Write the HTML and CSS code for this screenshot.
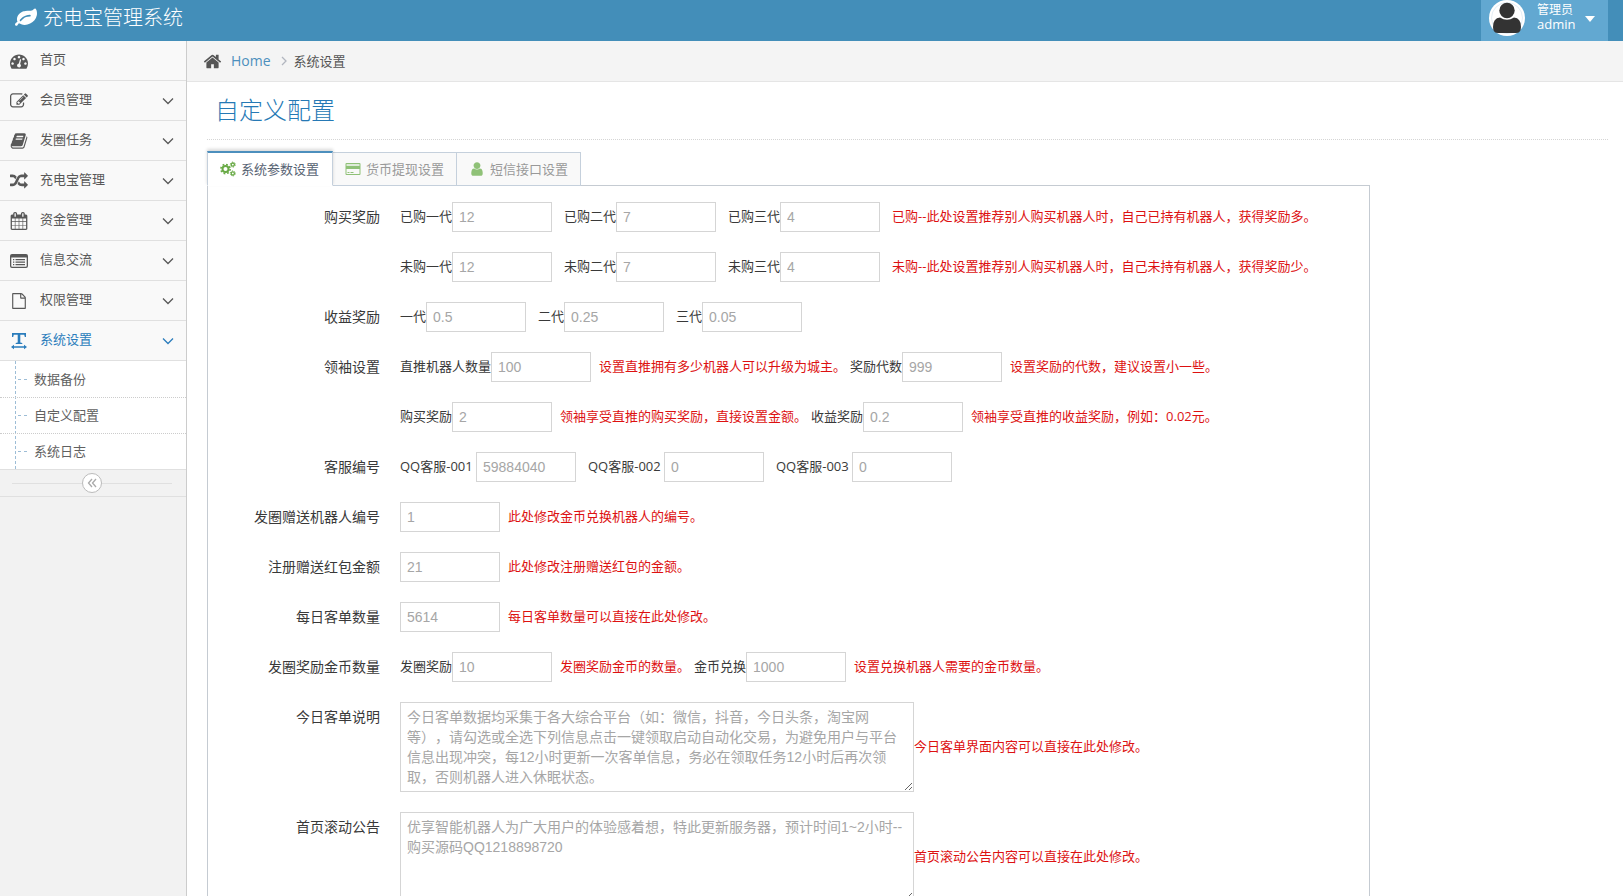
FILE: index.html
```html
<!DOCTYPE html>
<html lang="zh-CN">
<head>
<meta charset="utf-8">
<title>充电宝管理系统</title>
<link rel="stylesheet" href="styles.css">
</head>
<body>
<svg class="sprite" aria-hidden="true">
  <symbol id="down" viewBox="0 0 12 8"><path d="M1 1.5l5 5 5-5" fill="none" stroke="currentColor" stroke-width="1.300"/></symbol>
</svg>
<header class="navbar">
  <a class="brand" href="#">
    <svg class="brand-icon" viewBox="0 0 1792 1792"><path d="M1280 704q0-26-19-45t-45-19q-172 0-318 49.500t-259.500 134-235.500 219.500q-19 21-19 45 0 26 19 45t45 19q24 0 45-19 27-24 74-71t67-66q137-124 268.500-176t313.500-52q26 0 45-19t19-45zm512-198q0 95-20 193-46 224-184.500 383t-357.500 268q-214 108-438 108-148 0-286-47-15-5-88-42t-96-37q-16 0-39.500 32t-45 70-52.500 70-60 32q-43 0-63.500-17.500t-45.500-59.500q-2-4-6-11t-5.500-10-3-9.500-1.500-13.500q0-35 31-73.500t68-65.500 68-56 31-48q0-4-14-38t-16-44q-9-51-9-104 0-115 43.500-220t119-184.500 170.500-139 204-95.500q55-18 145-25.500t179.500-9 178.500-6 163.500-24 113.500-56.500l29.500-29.500 29.500-28 27-20 36.500-16 43.500-4.500q39 0 70.500 46t47.500 112 24 124 8 96z"/></svg>
    <span>充电宝管理系统</span>
  </a>
  <button class="user" type="button">
    <svg class="avatar" viewBox="0 0 36 36"><circle cx="18" cy="18" r="18" fill="#fff"/><circle cx="18" cy="18" r="15.500" fill="none" stroke="#e4eef5"/><circle cx="18" cy="10.500" r="7.700" fill="#333"/><path d="M4 27q0-9 7-9.500 7 4.500 14 0 7 .5 7 9.500 0 6-5 6H9q-5 0-5-6z" fill="#333"/></svg>
    <span class="user-text"><small>管理员</small>admin</span>
    <svg class="caret" viewBox="0 0 10 6"><path d="M0 0h10l-5 6z"/></svg>
  </button>
</header>
<div class="shell">
  <nav class="sidebar">
    <ul class="menu">
      <li><a href="#"><svg class="mi" viewBox="0 0 1792 1792"><path d="M384 1152q0-53-37.500-90.500t-90.500-37.500-90.500 37.500-37.500 90.500 37.500 90.500 90.500 37.500 90.500-37.500 37.500-90.500zm192-448q0-53-37.500-90.500t-90.500-37.500-90.500 37.500-37.500 90.500 37.500 90.500 90.500 37.500 90.500-37.500 37.500-90.500zm428 481l101-382q6-26-7.500-48.500t-38.500-29.500-48 6.500-30 39.500l-101 382q-60 5-107 43.500t-63 98.500q-20 77 20 146t117 89 146-20 89-117q16-60-6-117t-72-91zm660-33q0-53-37.500-90.500t-90.500-37.500-90.500 37.500-37.500 90.500 37.500 90.500 90.500 37.500 90.500-37.500 37.500-90.500zm-640-640q0-53-37.500-90.500t-90.500-37.500-90.500 37.500-37.500 90.500 37.500 90.500 90.500 37.500 90.500-37.500 37.500-90.500zm448 192q0-53-37.500-90.500t-90.500-37.500-90.500 37.500-37.500 90.500 37.500 90.500 90.500 37.500 90.500-37.500 37.500-90.500zm320 448q0 261-141 483-19 29-54 29h-1402q-35 0-54-29-141-221-141-483 0-182 71-348t191-286 286-191 348-71 348 71 286 191 191 286 71 348z"/></svg><span>首页</span></a></li>
      <li><a href="#"><svg class="mi" viewBox="0 0 1792 1792"><path d="M888 1184l116-116-152-152-116 116v56h96v96h56zm440-720q-16-16-33 1l-350 350q-17 17-1 33t33-1l350-350q17-17 1-33zm80 594v190q0 119-84.500 203.500t-203.500 84.500h-832q-119 0-203.500-84.500t-84.500-203.500v-832q0-119 84.500-203.500t203.500-84.500h832q63 0 117 25 15 7 18 23 3 17-9 29l-49 49q-14 14-32 8-23-6-45-6h-832q-66 0-113 47t-47 113v832q0 66 47 113t113 47h832q66 0 113-47t47-113v-126q0-13 9-22l64-64q15-15 35-7t20 29zm-96-738l288 288-672 672h-288v-288zm444 132l-92 92-288-288 92-92q28-28 68-28t68 28l152 152q28 28 28 68t-28 68z"/></svg><span>会员管理</span><svg class="arrow"><use href="#down"/></svg></a></li>
      <li><a href="#"><svg class="mi" viewBox="0 0 1792 1792"><path d="M1703 478q40 57 18 129l-275 906q-19 64-76.500 107.500t-122.500 43.500h-923q-77 0-148.500-53.500t-99.500-131.500q-24-67-2-127 0-4 3-27t4-37q1-8-3-21.500t-3-19.500q2-11 8-21t16.500-23.500 16.500-23.500q23-38 45-91.500t30-91.500q3-10 .5-30t-.5-28q3-11 17-28t17-23q21-36 42-92t25-90q1-9-2.500-32t.5-28q4-13 22-30.500t22-22.500q19-26 42.500-84.500t27.500-96.500q1-8-3-25.500t-2-26.500q2-8 9-18t18-23 17-21q8-12 16.500-30.500t15-35 16-36 19.500-32 26.500-23.500 36-11.500 47.500 5.500l-1 3q38-9 51-9h761q74 0 114 56t18 130l-274 906q-36 119-71.500 153.500t-128.500 34.500h-869q-27 0-38 15-11 16-1 43 24 70 144 70h923q29 0 56-15.500t35-41.500l300-987q7-22 5-57 38 15 59 43zm-1064 2q-4 13 2 22.500t20 9.500h608q13 0 25.500-9.500t16.500-22.500l21-64q4-13-2-22.500t-20-9.500h-608q-13 0-25.500 9.500t-16.500 22.500zm-83 256q-4 13 2 22.500t20 9.500h608q13 0 25.500-9.500t16.500-22.500l21-64q4-13-2-22.500t-20-9.500h-608q-13 0-25.500 9.500t-16.500 22.500z"/></svg><span>发圈任务</span><svg class="arrow"><use href="#down"/></svg></a></li>
      <li><a href="#"><svg class="mi" viewBox="0 0 1792 1792"><path d="M666 481q-60 92-137 273-22-45-37-72.500t-40.500-63.500-51-56.500-63-35-81.500-14.500h-224q-14 0-23-9t-9-23v-192q0-14 9-23t23-9h224q250 0 410 225zm1126 799q0 14-9 23l-320 320q-9 9-23 9-13 0-22.500-9.500t-9.500-22.500v-192q-32 0-85 .5t-81 1-73-1-71-5-64-10.500-63-18.500-58-28.500-59-40-55-53.500-56-69.500q59-93 136-273 22 45 37 72.500t40.500 63.500 51 56.500 63 35 81.500 14.500h256v-192q0-14 9-23t23-9q12 0 24 10l319 319q9 9 9 23zm0-896q0 14-9 23l-320 320q-9 9-23 9-13 0-22.500-9.500t-9.500-22.500v-192h-256q-48 0-87 15t-69 45-51 61.500-45 77.500q-32 62-78 171-29 66-49.500 111t-54 105-64 100-74 83-90 68.500-106.500 42-128 16.500h-224q-14 0-23-9t-9-23v-192q0-14 9-23t23-9h224q48 0 87-15t69-45 51-61.500 45-77.500q32-62 78-171 29-66 49.500-111t54-105 64-100 74-83 90-68.500 106.500-42 128-16.500h256v-192q0-14 9-23t23-9q12 0 24 10l319 319q9 9 9 23z"/></svg><span>充电宝管理</span><svg class="arrow"><use href="#down"/></svg></a></li>
      <li><a href="#"><svg class="mi" viewBox="0 0 1792 1792"><path d="M192 1664h288v-288h-288v288zm352 0h320v-288h-320v288zm-352-352h288v-320h-288v320zm352 0h320v-320h-320v320zm-352-384h288v-288h-288v288zm736 736h320v-288h-320v288zm-384-736h320v-288h-320v288zm768 736h288v-288h-288v288zm-384-352h320v-320h-320v320zm-352-864v-288q0-13-9.500-22.500t-22.500-9.500h-64q-13 0-22.500 9.500t-9.500 22.500v288q0 13 9.500 22.500t22.500 9.500h64q13 0 22.500-9.500t9.500-22.500zm736 864h288v-320h-288v320zm-384-384h320v-288h-320v288zm384 0h288v-288h-288v288zm32-480v-288q0-13-9.500-22.500t-22.500-9.500h-64q-13 0-22.500 9.500t-9.500 22.500v288q0 13 9.500 22.500t22.500 9.500h64q13 0 22.500-9.500t9.500-22.500zm384-64v1280q0 52-38 90t-90 38h-1408q-52 0-90-38t-38-90v-1280q0-52 38-90t90-38h128v-96q0-66 47-113t113-47h64q66 0 113 47t47 113v96h384v-96q0-66 47-113t113-47h64q66 0 113 47t47 113v96h128q52 0 90 38t38 90z"/></svg><span>资金管理</span><svg class="arrow"><use href="#down"/></svg></a></li>
      <li><a href="#"><svg class="mi" viewBox="0 0 18 18"><path fill-rule="evenodd" d="M2 2h14q2 0 2 2v10q0 2-2 2H2q-2 0-2-2V4q0-2 2-2zM1.300 5.500V14q0 .7.7.7h14q.7 0 .7-.7V5.500z"/><path d="M3 7h1.300v1.200H3zM5.500 7H15v1.200H5.500zM3 9.500h1.300v1.200H3zM5.500 9.500H15v1.200H5.500zM3 12h1.300v1.200H3zM5.500 12H15v1.200H5.500z"/></svg><span>信息交流</span><svg class="arrow"><use href="#down"/></svg></a></li>
      <li><a href="#"><svg class="mi file" viewBox="0 0 1792 1792"><path d="M1596 380q28 28 48 76t20 88v1152q0 40-28 68t-68 28h-1344q-40 0-68-28t-28-68v-1600q0-40 28-68t68-28h896q40 0 88 20t76 48zm-444-244v376h376q-10-29-22-41l-313-313q-12-12-41-22zm384 1528v-1024h-416q-40 0-68-28t-28-68v-416h-768v1536h1280z"/></svg><span>权限管理</span><svg class="arrow"><use href="#down"/></svg></a></li>
      <li class="open"><a href="#"><svg class="mi" viewBox="0 0 18 18"><path d="M2 1h14v4h-1.200l-.6-2.300H10.300V10.500l2 .5v1H5.700v-1l2-.5V2.700H3.800L3.200 5H2zM1 15l3-2.300v1.500h10v-1.500l3 2.300-3 2.300v-1.500H4v1.500z"/></svg><span>系统设置</span><svg class="arrow"><use href="#down"/></svg></a>
        <ul class="submenu">
          <li><a href="#">数据备份</a></li>
          <li><a href="#">自定义配置</a></li>
          <li><a href="#">系统日志</a></li>
        </ul>
      </li>
    </ul>
    <div class="collapse"><button type="button" aria-label="收起菜单"><svg viewBox="0 0 10 10"><path d="M5 1L1.500 5 5 9M9 1L5.500 5 9 9" fill="none" stroke="currentColor" stroke-width="1.300"/></svg></button></div>
  </nav>
  <main class="main">
    <div class="crumbs">
      <svg class="home" viewBox="0 0 1792 1792"><path d="M1472 992v480q0 26-19 45t-45 19h-384v-384h-256v384h-384q-26 0-45-19t-19-45v-480q0-1 .5-3t.5-3l575-474 575 474q1 2 1 6zm223-69l-62 74q-8 9-21 11h-3q-13 0-21-7l-692-577-692 577q-12 8-24 7-13-2-21-11l-62-74q-8-10-7-23.500t11-21.500l719-599q32-26 76-26t76 26l244 204v-195q0-14 9-23t23-9h192q14 0 23 9t9 23v408l219 182q10 8 11 21.500t-7 23.500z"/></svg>
      <a href="#">Home</a>
      <svg class="sep" viewBox="0 0 6 10"><path d="M1 1l4 4-4 4" fill="none" stroke="currentColor" stroke-width="1.300"/></svg>
      <span>系统设置</span>
    </div>
    <div class="content">
      <h1>自定义配置</h1>
      <div class="tabbed">
        <div class="tabs" role="tablist">
          <button class="tab active" type="button" role="tab" aria-selected="true"><svg viewBox="0 0 16 16"><g fill="none" stroke="currentColor"><circle cx="5.500" cy="8" r="3" stroke-width="2"/><circle cx="5.500" cy="8" r="4.600" stroke-width="1.600" stroke-dasharray="1.800 1.813"/><circle cx="12.800" cy="3.600" r="1.600" stroke-width="1.300"/><circle cx="12.800" cy="3.600" r="2.500" stroke-width="1" stroke-dasharray="1.300 1.318"/><circle cx="12.800" cy="12.400" r="1.600" stroke-width="1.300"/><circle cx="12.800" cy="12.400" r="2.500" stroke-width="1" stroke-dasharray="1.300 1.318"/></g></svg>系统参数设置</button>
          <button class="tab" type="button" role="tab"><svg viewBox="0 0 16 16"><path fill-rule="evenodd" d="M1.500 2h13q1 0 1 1v10q0 1-1 1h-13q-1 0-1-1V3q0-1 1-1zM1.500 3.200v1.600h13V3.200zM1.500 8v5h13V8z"/><path d="M2.500 11h2v1h-2zM5.500 11h3v1h-3z"/></svg>货币提现设置</button>
          <button class="tab" type="button" role="tab"><svg viewBox="0 0 1792 1792"><path d="M1536 1399q0 109-62.500 187t-150.500 78h-854q-88 0-150.500-78t-62.500-187q0-85 8.500-160.500t31.500-152 58.500-131 94-89 134.500-34.500q131 128 313 128t313-128q76 0 134.500 34.500t94 89 58.500 131 31.500 152 8.500 160.500zm-256-887q0 159-112.500 271.500t-271.500 112.500-271.500-112.500-112.500-271.500 112.500-271.500 271.500-112.500 271.500 112.500 112.500 271.500z"/></svg>短信接口设置</button>
        </div>
        <form class="panel">
          <div class="row"><span class="name">购买奖励</span><div class="fields wide">
            <label>已购一代<input type="text" value="12"></label><label>已购二代<input type="text" value="7"></label><label>已购三代<input type="text" value="4"></label><span class="hint">已购--此处设置推荐别人购买机器人时，自己已持有机器人，获得奖励多。</span></div></div>
          <div class="row"><span class="name"></span><div class="fields wide">
            <label>未购一代<input type="text" value="12"></label><label>未购二代<input type="text" value="7"></label><label>未购三代<input type="text" value="4"></label><span class="hint">未购--此处设置推荐别人购买机器人时，自己未持有机器人，获得奖励少。</span></div></div>
          <div class="row"><span class="name">收益奖励</span><div class="fields wide">
            <label>一代<input type="text" value="0.5"></label><label>二代<input type="text" value="0.25"></label><label>三代<input type="text" value="0.05"></label></div></div>
          <div class="row"><span class="name">领袖设置</span><div class="fields">
            <label>直推机器人数量<input type="text" value="100"></label><span class="hint">设置直推拥有多少机器人可以升级为城主。</span><label>奖励代数<input type="text" value="999"></label><span class="hint">设置奖励的代数，建议设置小一些。</span></div></div>
          <div class="row"><span class="name"></span><div class="fields">
            <label>购买奖励<input type="text" value="2"></label><span class="hint">领袖享受直推的购买奖励，直接设置金额。</span><label>收益奖励<input type="text" value="0.2"></label><span class="hint">领袖享受直推的收益奖励，例如：0.02元。</span></div></div>
          <div class="row"><span class="name">客服编号</span><div class="fields wide service">
            <label><span>QQ客服-001</span><input type="text" value="59884040"></label><label><span>QQ客服-002</span><input type="text" value="0"></label><label><span>QQ客服-003</span><input type="text" value="0"></label></div></div>
          <div class="row"><label class="name" for="robot">发圈赠送机器人编号</label><div class="fields"><input id="robot" type="text" value="1"><span class="hint">此处修改金币兑换机器人的编号。</span></div></div>
          <div class="row"><label class="name" for="bonus">注册赠送红包金额</label><div class="fields"><input id="bonus" type="text" value="21"><span class="hint">此处修改注册赠送红包的金额。</span></div></div>
          <div class="row"><label class="name" for="daily">每日客单数量</label><div class="fields"><input id="daily" type="text" value="5614"><span class="hint">每日客单数量可以直接在此处修改。</span></div></div>
          <div class="row"><span class="name">发圈奖励金币数量</span><div class="fields">
            <label>发圈奖励<input type="text" value="10"></label><span class="hint">发圈奖励金币的数量。</span><label>金币兑换<input type="text" value="1000"></label><span class="hint">设置兑换机器人需要的金币数量。</span></div></div>
          <div class="row"><label class="name" for="note">今日客单说明</label><div class="fields tall"><textarea id="note">今日客单数据均采集于各大综合平台（如：微信，抖音，今日头条，淘宝网等），请勾选或全选下列信息点击一键领取启动自动化交易，为避免用户与平台信息出现冲突，每12小时更新一次客单信息，务必在领取任务12小时后再次领取，否则机器人进入休眠状态。</textarea><span class="hint">今日客单界面内容可以直接在此处修改。</span></div></div>
          <div class="row"><label class="name" for="notice">首页滚动公告</label><div class="fields tall"><textarea id="notice">优享智能机器人为广大用户的体验感着想，特此更新服务器，预计时间1~2小时--购买源码QQ1218898720</textarea><span class="hint">首页滚动公告内容可以直接在此处修改。</span></div></div>
        </form>
      </div>
    </div>
  </main>
</div>
</body>
</html>
```
FILE: styles.css
```css
* { box-sizing: border-box; }
body {
  margin: 0;
  height: 100vh;
  overflow: hidden;
  display: flex;
  flex-direction: column;
  font: 13px/20px "Open Sans", "Noto Sans CJK SC", sans-serif;
  color: #393939;
  background: #fff;
  text-spacing-trim: space-all;
}
a { text-decoration: none; color: inherit; }
ul { list-style: none; margin: 0; padding: 0; }
svg { fill: currentColor; flex: none; }
button { font: inherit; cursor: pointer; }
.sprite { display: none; }

.navbar {
  flex: none;
  height: 41px;
  display: flex;
  justify-content: space-between;
  padding: 0 15px;
  background: #438eb9;
  color: #fff;
}
.brand { display: flex; align-items: center; gap: 6px; padding-bottom: 5px; font-size: 20px; font-weight: 300; }
.brand-icon { width: 22px; height: 22px; }
.user {
  width: 127px;
  display: flex;
  align-items: flex-start;
  padding: 0 8px;
  border: 0;
  background: #62a8d1;
  color: #fff;
  text-align: left;
}
.avatar { width: 36px; height: 36px; }
.user-text { margin: 2px 0 0 12px; font-size: 13px; line-height: 15px; flex: 1; }
.user-text small { display: block; font-size: 12px; }
.caret { width: 10px; height: 6px; margin: 16px 5px 0 0; }

.shell { flex: 1; min-height: 0; display: flex; }
.sidebar { flex: none; width: 187px; background: #f2f2f2; border-right: 1px solid #ccc; }
.menu > li > a {
  display: flex;
  align-items: center;
  height: 40px;
  padding: 0 12px 0 10px;
  border-bottom: 1px solid #e0e0e0;
  background: #f9f9f9;
  color: #585858;
}
.menu > li > a span { flex: 1; padding-bottom: 3px; }
.mi { width: 18px; height: 18px; margin-right: 12px; }
.file { height: 16px; }
.arrow { width: 12px; height: 8px; }
.menu > .open > a { color: #2b7dbc; }
.submenu { position: relative; background: #fff; }
.submenu::before {
  content: "";
  position: absolute;
  left: 15px;
  top: 0;
  bottom: 0;
  border-left: 1px dashed #9dbdd6;
}
.submenu a { position: relative; display: block; height: 36px; padding: 8px 0 8px 34px; color: #616161; border-top: 1px dotted #ccc; line-height: 19px; }
.submenu li:first-child a { border-top-color: transparent; }
.submenu a::before {
  content: "";
  position: absolute;
  left: 18px;
  top: 17px;
  width: 9px;
  border-top: 1px dashed #9dbdd6;
}
.collapse {
  display: flex;
  align-items: center;
  justify-content: center;
  height: 28px;
  padding: 0 14px 0 12px;
  border-top: 1px solid #e0e0e0;
  border-bottom: 1px solid #e0e0e0;
}
.collapse::before, .collapse::after { content: ""; flex: 1; border-top: 1px solid #e0e0e0; }
.collapse button {
  display: grid;
  place-items: center;
  width: 20px;
  height: 20px;
  padding: 0;
  border: 1px solid #bbb;
  border-radius: 50%;
  background: #fff;
  color: #aaa;
}
.collapse svg { width: 10px; height: 10px; }

.main { flex: 1; min-width: 0; overflow: hidden; }
.crumbs {
  display: flex;
  align-items: center;
  height: 41px;
  padding: 0 16px;
  background: #f4f4f4;
  border-bottom: 1px solid #e5e5e5;
  color: #555;
}
.crumbs a { margin: 0 10px 0 9px; font-size: 14px; color: #4c8fbd; }
.home { width: 19px; height: 19px; }
.sep { width: 6px; height: 10px; margin-right: 7px; color: #b2b6bf; }
.content { padding: 8px 15px 24px 20px; }
h1 {
  margin: 0 0 11px;
  padding: 0 8px 10px;
  border-bottom: 1px dotted #d5d5d5;
  color: #2679b5;
  font-size: 24px;
  font-weight: 300;
  line-height: 39px;
}
.tabbed { width: 83%; }
.tabs { display: flex; align-items: flex-end; }
.tab {
  display: flex;
  align-items: center;
  gap: 5px;
  height: 34px;
  padding: 0 12px 1px;
  border: 1px solid #c5d0dc;
  border-left: 0;
  background: #f9f9f9;
  color: #999;
}
.tab svg { width: 16px; height: 16px; color: #8fc177; }
.tab.active {
  z-index: 1;
  height: 35px;
  padding-right: 13px;
  border-left: 1px solid #c5d0dc;
  border-top: 2px solid #4c8fbd;
  border-bottom-color: #fff;
  background: #fff;
  color: #576373;
  box-shadow: 0 -2px 3px rgba(0, 0, 0, .15);
}
.tab.active svg { color: #69aa46; }
.panel {
  display: flex;
  flex-direction: column;
  gap: 20px;
  margin-top: -1px;
  padding: 16px 12px;
  border: 1px solid #c5cbd2;
}
.row { display: flex; gap: 20px; }
.name { flex: none; width: 160px; text-align: right; font-size: 14px; line-height: 30px; }
.fields { display: flex; align-items: center; height: 30px; line-height: 28px; white-space: nowrap; }
.fields.tall { height: 90px; }
.fields label { display: flex; line-height: 28px; }
.service label span { min-width: 76px; }
.hint { margin: 0 4px 0 8px; padding-bottom: 2px; color: #dd1111; }
.wide { gap: 12px; }
.wide .hint, .tall .hint { margin: 0; }
input, textarea {
  border: 1px solid #d5d5d5;
  border-radius: 0;
  background: #fff;
  color: #a6a6a6;
  font: 14px/20px "Liberation Sans", "Noto Sans CJK SC", sans-serif;
}
input { width: 100px; height: 30px; padding: 4px 6px; }
textarea { width: 514px; height: 90px; padding: 4px 6px; overflow: hidden; resize: both; text-spacing-trim: space-all; }
```
